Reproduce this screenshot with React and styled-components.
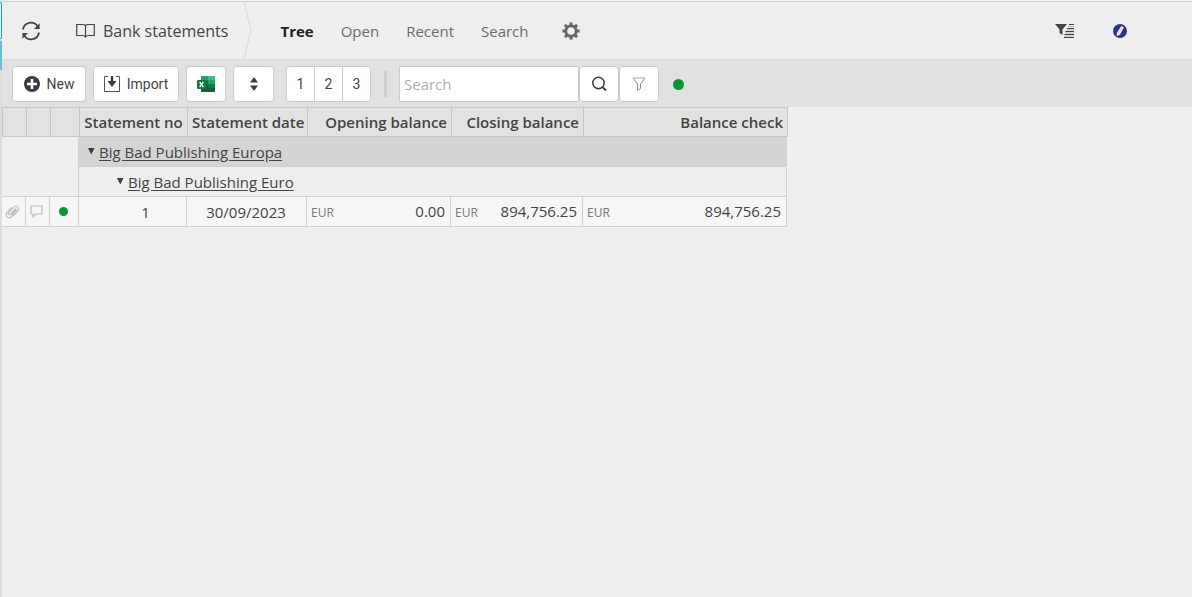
import React from "react";
import styled, { createGlobalStyle } from "styled-components";

const GlobalStyle = createGlobalStyle`
  * { box-sizing: border-box; }
  body {
    margin: 0;
    background: #eeeeee;
    color: #444444;
    font-family: "Open Sans", "Noto Sans", sans-serif;
    font-size: 15px;
  }
  button, input { font: inherit; color: inherit; }
`;

const Page = styled.div`
  display: flex;
  min-height: 100vh;
  background: #eeeeee;
`;

const Rail = styled.aside`
  flex: none;
  width: 2px;
  padding-top: 2px;
  background: #dddddd;
`;

const RailItem = styled.div`
  height: 37px;
  margin-bottom: 2px;
  background: #eeeeee;
  border: 1px solid #1f9bbf;
  border-left: 0;
  border-radius: 0 2px 2px 0;
`;

const RailActive = styled.div`
  height: 29px;
  background: #69bfd6;
`;

const Main = styled.main`
  flex: 1;
  min-width: 0;
`;

const Header = styled.header`
  display: flex;
  align-items: stretch;
  height: 59px;
  border-top: 1px solid #d0d0d0;
  border-bottom: 1px solid #dcdcdc;
`;

const TopGap = styled.div`
  height: 1px;
  background: #f4f4f4;
`;

const IconButton = styled.button`
  display: flex;
  align-items: center;
  justify-content: center;
  width: ${(p) => p.$width}px;
  padding: 0;
  border: 0;
  background: none;
  color: ${(p) => p.$color || "#444444"};
`;

const Crumb = styled.h1`
  display: flex;
  align-items: center;
  gap: 8px;
  margin: 0;
  padding-left: 16px;
  font-size: 16px;
  font-weight: 400;
`;

const Chevron = styled.svg`
  margin-left: 8px;
  display: block;
`;

const Tabs = styled.nav`
  display: flex;
  align-items: center;
  gap: 27px;
  padding: 0 12px 0 26px;
`;

const Tab = styled.a`
  color: ${(p) => (p.$active ? "#222222" : "#6c6c6c")};
  font-size: 15px;
  font-weight: ${(p) => (p.$active ? 700 : 400)};
  text-decoration: none;
`;

const HeaderTools = styled.div`
  display: flex;
  margin-left: auto;
  padding-right: 45px;
`;

const Toolbar = styled.div`
  display: flex;
  align-items: center;
  height: 47px;
  padding: 1px 10px 0;
  background: #e1e1e1;
  font-family: Roboto, sans-serif;
  font-size: 14px;
`;

const Button = styled.button`
  display: flex;
  align-items: center;
  justify-content: center;
  gap: ${(p) => p.$gap || 0}px;
  width: ${(p) => p.$width}px;
  height: 36px;
  margin-right: ${(p) => (p.$joined ? 0 : 7)}px;
  padding: 0;
  border: 1px solid #cccccc;
  border-radius: 4px;
  background: #ffffff;
`;

const Levels = styled.div`
  display: flex;
  width: 85px;
  height: 36px;
  margin-left: 5px;
  overflow: hidden;
  border: 1px solid #cccccc;
  border-radius: 4px;
  background: #ffffff;
`;

const Level = styled.button`
  flex: 1;
  padding: 0;
  border: 0;
  background: none;
  & + & { border-left: 1px solid #cccccc; }
`;

const Divider = styled.div`
  width: 3px;
  height: 26px;
  margin: 0 12px 0 13px;
  background: #cfcfcf;
`;

const SearchInput = styled.input`
  width: 180px;
  height: 36px;
  padding: 0 4px;
  border: 1px solid #cccccc;
  border-radius: 0;
  background: #ffffff;
  font-family: "Open Sans", "Noto Sans", sans-serif;
  font-size: 15px;
  &::placeholder { color: #b0b0b0; opacity: 1; }
`;

const Dot = styled.span`
  display: inline-block;
  flex: none;
  width: ${(p) => p.$size}px;
  height: ${(p) => p.$size}px;
  border-radius: 50%;
  background: #009933;
`;

const ToolbarStatus = styled.div`
  display: flex;
  padding-left: 14px;
`;

const Table = styled.table`
  width: 785px;
  table-layout: fixed;
  border-collapse: separate;
  border-spacing: 0;
  line-height: 20px;
`;

const Th = styled.th`
  height: 30px;
  padding: 0 4px;
  border: solid #c6c6c6;
  border-width: 1px 0 1px 1px;
  background: #e2e2e2;
  font-size: 15px;
  font-weight: 600;
  text-align: ${(p) => p.$align || "center"};
  white-space: nowrap;
  &:last-child { box-shadow: 1px 0 0 #c6c6c6; }
`;

const Td = styled.td`
  height: 30px;
  padding: 0 5px 0 4px;
  border: solid #d0d0d0;
  border-width: 0 1px 1px 0;
  background: #f6f6f6;
  text-align: ${(p) => p.$align || "left"};
  white-space: nowrap;
`;

const NumberTd = styled(Td)`
  padding: 0 0 0 26px;
  text-align: center;
`;

const IconTd = styled(Td)`
  padding: 0 2px 0 0;
  text-align: center;
  line-height: 0;
`;

const Gutter = styled.td`
  border-right: 1px solid #d0d0d0;
  border-bottom: 1px solid #d0d0d0;
`;

const GroupTd = styled(Td)`
  padding-left: ${(p) => 8 + p.$level * 29}px;
  background: ${(p) => (p.$level ? "#eeeeee" : "#d4d4d4")};
`;

const Group = styled.div`
  display: flex;
  align-items: center;
  gap: 4px;
`;

const GroupLink = styled.a`
  color: #444444;
  font-weight: 500;
  text-decoration: underline;
  text-underline-offset: 2px;
`;

const Caret = styled.button`
  display: flex;
  width: 8px;
  height: 8px;
  padding: 0;
  border: 0;
  background: none;
`;

const Money = styled.div`
  display: flex;
  align-items: baseline;
  justify-content: space-between;
`;

const Currency = styled.span`
  color: #777777;
  font-size: 12px;
`;

const columns = [
  { width: 24, label: "" },
  { width: 24, label: "" },
  { width: 29, label: "" },
  { width: 108, label: "Statement no" },
  { width: 120, label: "Statement date" },
  { width: 144, label: "Opening balance", align: "right" },
  { width: 132, label: "Closing balance", align: "right" },
  { width: 204, label: "Balance check", align: "right" },
];

function RefreshIcon() {
  return (
    <svg width="20" height="20" viewBox="0 0 20 20" fill="none" stroke="currentColor" strokeWidth="1.7">
      <path d="M2 8.5A8 8 0 0 1 16.6 5.3M18 11.500A8 8 0 0 1 3.400 14.700" />
      <path d="M18.600 2.300V8H13zM1.400 17.700V12H7z" fill="currentColor" stroke="none" />
    </svg>
  );
}

function BookIcon() {
  return (
    <svg width="19" height="16" viewBox="0 0 19 16" fill="none" stroke="#444444" strokeWidth="1.2">
      <path d="M9.500 2.500C8.500 1.500 7.500 1.500 6.500 1.500H.7V12.500H6.500C7.800 12.500 8.800 12.800 9.500 14C10.200 12.800 11.200 12.500 12.500 12.500H18.300V1.500H12.500C11.500 1.500 10.500 1.500 9.500 2.500V13.500" />
    </svg>
  );
}

function GearIcon() {
  return (
    <svg width="18" height="18" viewBox="0 0 18 18" fill="none" stroke="currentColor">
      <circle cx="9" cy="9" r="5.200" strokeWidth="2.800" />
      {[0, 45, 90, 135, 180, 225, 270, 315].map((a) => (
        <path key={a} d="M9 .4V3.400" strokeWidth="3" transform={`rotate(${a} 9 9)`} />
      ))}
    </svg>
  );
}

function FilterListIcon() {
  return (
    <svg width="20" height="14" viewBox="0 0 20 14">
      <path d="M0 0H12L7.500 5.500V11L4.500 9V5.500z" fill="#444444" />
      <path d="M14 .5H19M12 4.500H19M10.500 7.500H19M9.500 10.500H19M9 13.500H19" stroke="#444444" />
      <path d="M13 2.500H19M11 6H19M10 9H19M9 12H19" stroke="#b4b4b4" />
    </svg>
  );
}

function PenIcon() {
  return (
    <svg width="14" height="14" viewBox="0 0 14 14">
      <circle cx="7" cy="7" r="7" fill="#2e3192" />
      <path d="M8.300 2L11 3.300 6.700 11 3.700 12 3.900 8.700z" fill="#eeeeee" />
      <path d="M8.800 4.500L5.700 9.500" stroke="#b9bade" strokeWidth=".6" />
    </svg>
  );
}

function PlusIcon() {
  return (
    <svg width="16" height="16" viewBox="0 0 16 16">
      <circle cx="8" cy="8" r="8" fill="#3c3c3c" />
      <path d="M8 3V13M3 8H13" stroke="#ffffff" strokeWidth="2.600" />
    </svg>
  );
}

function ImportIcon() {
  return (
    <svg width="16" height="16" viewBox="0 0 16 16">
      <path d="M4 .5H.5V15.500H15.500V.5H12" fill="none" stroke="#555555" />
      <path d="M6.800 0H9.200V5H12.500L8 11 3.500 5H6.800z" fill="#3c3c3c" />
    </svg>
  );
}

function ExcelIcon() {
  return (
    <svg width="18" height="16" viewBox="0 0 18 16">
      <rect x="4" width="14" height="16" rx="1" fill="#185c37" />
      <path d="M5 0H11V4H4V1Q4 0 5 0z" fill="#21a366" />
      <path d="M11 0H17Q18 0 18 1V4H11z" fill="#33c481" />
      <path d="M4 4H11V8H4z" fill="#107c41" />
      <path d="M11 4H18V8H11z" fill="#21a366" />
      <path d="M11 8H18V12H11z" fill="#107c41" />
      <rect y="4" width="9" height="9" rx="1" fill="#107c41" />
      <path d="M2.700 6L6.300 11M6.300 6L2.700 11" stroke="#ffffff" strokeWidth="1.300" />
    </svg>
  );
}

function SortIcon() {
  return (
    <svg width="8" height="14" viewBox="0 0 8 14" fill="#3c3c3c">
      <path d="M4 0L8 5.500H0zM4 14L8 8.500H0z" />
    </svg>
  );
}

function SearchIcon() {
  return (
    <svg width="16" height="16" viewBox="0 0 16 16" fill="none" stroke="#3c3c3c" strokeWidth="1.500">
      <circle cx="7.500" cy="7" r="5.700" />
      <path d="M11.500 11L15 14.500" strokeWidth="1.800" />
    </svg>
  );
}

function FunnelIcon() {
  return (
    <svg width="14" height="14" viewBox="0 0 14 14" fill="none">
      <path d="M1 1H13L8.500 7V11.500L5.500 13.500V7z" stroke="#858b96" />
      <path d="M.5 1H13.500" stroke="#dcdcdc" />
    </svg>
  );
}

function ClipIcon() {
  return (
    <svg width="15" height="14" viewBox="0 0 15 14" fill="none" stroke="#bbbbbb" strokeWidth="1.100" strokeLinecap="round">
      <path d="M10.500 4L5.300 9.300A1.200 1.200 0 0 1 3.600 7.600L9 2.100A2.700 2.700 0 0 1 13 6L6.400 12A3.200 3.200 0 0 1 1.800 7.600L6.500 2.700M12 4.500L6.500 10" />
    </svg>
  );
}

function CommentIcon() {
  return (
    <svg width="13" height="13" viewBox="0 0 13 13" fill="none" stroke="#bbbbbb" strokeWidth="1.200">
      <path d="M1 1H12V9H5.500L3 11.800V9H1z" />
    </svg>
  );
}

function GroupRow({ level, label, gutter }) {
  return (
    <tr>
      {gutter && <Gutter colSpan={3} rowSpan={2} />}
      <GroupTd colSpan={5} $level={level}>
        <Group>
          <Caret aria-label={`Collapse ${label}`}>
            <svg width="8" height="7" viewBox="0 0 8 7">
              <path d="M1 0H7.500L4.300 6.500z" fill="#3c3c3c" />
            </svg>
          </Caret>
          <GroupLink href="#">{label}</GroupLink>
        </Group>
      </GroupTd>
    </tr>
  );
}

function MoneyCell({ amount }) {
  return (
    <Td>
      <Money>
        <Currency>EUR</Currency>
        <span>{amount}</span>
      </Money>
    </Td>
  );
}

export default function App() {
  return (
    <Page>
      <GlobalStyle />
      <Rail>
        <RailItem />
        <RailActive />
      </Rail>
      <Main>
        <TopGap />
        <Header>
          <IconButton $width={58} aria-label="Refresh"><RefreshIcon /></IconButton>
          <Crumb><BookIcon />Bank statements</Crumb>
          <Chevron width="18" height="57" viewBox="0 0 18 57" fill="none" stroke="#d8d8d8">
            <path d="M8 0L15 28L8 57" />
          </Chevron>
          <Tabs>
            <Tab href="#" $active aria-current="page">Tree</Tab>
            <Tab href="#">Open</Tab>
            <Tab href="#">Recent</Tab>
            <Tab href="#">Search</Tab>
          </Tabs>
          <IconButton $width={60} $color="#666666" aria-label="Settings"><GearIcon /></IconButton>
          <HeaderTools>
            <IconButton $width={56} aria-label="Filter list"><FilterListIcon /></IconButton>
            <IconButton $width={54} aria-label="Edit"><PenIcon /></IconButton>
          </HeaderTools>
        </Header>
        <Toolbar>
          <Button $width={74} $gap={7}><PlusIcon />New</Button>
          <Button $width={86} $gap={7}><ImportIcon />Import</Button>
          <Button $width={40} aria-label="Export to Excel"><ExcelIcon /></Button>
          <Button $width={41} aria-label="Sort"><SortIcon /></Button>
          <Levels>
            <Level>1</Level>
            <Level>2</Level>
            <Level>3</Level>
          </Levels>
          <Divider />
          <SearchInput type="text" placeholder="Search" aria-label="Search" />
          <Button $width={40} $joined aria-label="Search"><SearchIcon /></Button>
          <Button $width={40} $joined aria-label="Filter"><FunnelIcon /></Button>
          <ToolbarStatus><Dot $size={11} /></ToolbarStatus>
        </Toolbar>
        <Table>
          <colgroup>
            {columns.map((c, i) => <col key={i} width={c.width} />)}
          </colgroup>
          <thead>
            <tr>
              {columns.map((c, i) => <Th key={i} $align={c.align}>{c.label}</Th>)}
            </tr>
          </thead>
          <tbody>
            <GroupRow level={0} label="Big Bad Publishing Europa" gutter />
            <GroupRow level={1} label="Big Bad Publishing Euro" />
            <tr>
              <IconTd><ClipIcon /></IconTd>
              <IconTd><CommentIcon /></IconTd>
              <IconTd><Dot $size={9} /></IconTd>
              <NumberTd>1</NumberTd>
              <Td $align="center">30/09/2023</Td>
              <MoneyCell amount="0.00" />
              <MoneyCell amount="894,756.25" />
              <MoneyCell amount="894,756.25" />
            </tr>
          </tbody>
        </Table>
      </Main>
    </Page>
  );
}
